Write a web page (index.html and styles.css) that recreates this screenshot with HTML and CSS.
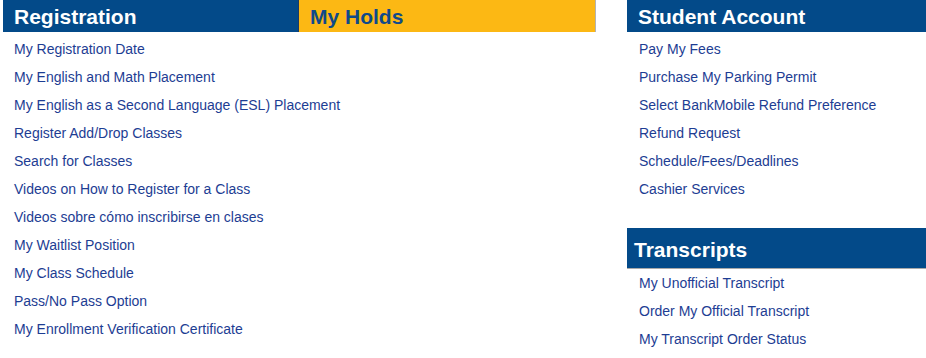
FILE: index.html
```html
<!DOCTYPE html>
<html lang="en">
<head>
<meta charset="utf-8">
<title>Registration</title>
<link rel="stylesheet" href="styles.css">
</head>
<body>
<div class="page">
  <section class="col-main">
    <div class="tabs">
      <h2 class="tab tab-reg">Registration</h2>
      <h2 class="tab tab-holds">My Holds</h2>
    </div>
    <ul class="links">
      <li><a href="#">My Registration Date</a></li>
      <li><a href="#">My English and Math Placement</a></li>
      <li><a href="#">My English as a Second Language (ESL) Placement</a></li>
      <li><a href="#">Register Add/Drop Classes</a></li>
      <li><a href="#">Search for Classes</a></li>
      <li><a href="#">Videos on How to Register for a Class</a></li>
      <li><a href="#">Videos sobre cómo inscribirse en clases</a></li>
      <li><a href="#">My Waitlist Position</a></li>
      <li><a href="#">My Class Schedule</a></li>
      <li><a href="#">Pass/No Pass Option</a></li>
      <li><a href="#">My Enrollment Verification Certificate</a></li>
    </ul>
  </section>
  <aside class="col-side">
    <section class="panel">
      <h2 class="panel-head">Student Account</h2>
      <ul class="links links-side">
        <li><a href="#">Pay My Fees</a></li>
        <li><a href="#">Purchase My Parking Permit</a></li>
        <li><a href="#">Select BankMobile Refund Preference</a></li>
        <li><a href="#">Refund Request</a></li>
        <li><a href="#">Schedule/Fees/Deadlines</a></li>
        <li><a href="#">Cashier Services</a></li>
      </ul>
    </section>
    <section class="panel panel-transcripts">
      <h2 class="panel-head panel-head-lg">Transcripts</h2>
      <ul class="links links-side">
        <li><a href="#">My Unofficial Transcript</a></li>
        <li><a href="#">Order My Official Transcript</a></li>
        <li><a href="#">My Transcript Order Status</a></li>
      </ul>
    </section>
  </aside>
</div>
</body>
</html>
```

FILE: styles.css
```css
* {
  box-sizing: border-box;
}

html, body {
  margin: 0;
  padding: 0;
  background: #ffffff;
}

body {
  font-family: "Liberation Sans", Arial, sans-serif;
  overflow: hidden;
}

.page {
  display: flex;
  gap: 31px;
  padding-left: 3px;
  width: 926px;
}

.col-main {
  width: 593px;
  flex: none;
}

.col-side {
  width: 299px;
  flex: none;
}

.tabs {
  display: flex;
}

.tab {
  margin: 0;
  height: 32px;
  padding: 2px 0 0 11px;
  font-size: 21px;
  line-height: 30px;
  font-weight: bold;
}

.tab-reg {
  width: 296px;
  background: #034a89;
  color: #ffffff;
  border-right: 1px solid #1c3a63;
}

.tab-holds {
  width: 297px;
  background: #fcb814;
  color: #0f4a8a;
  border-right: 1px solid #b3b3b3;
}

.links {
  list-style: none;
  margin: 3px 0 0;
  padding: 0 0 0 11px;
}

.links li {
  height: 28px;
  font-size: 14px;
  line-height: 28px;
}

.links a {
  color: #1d3d93;
  text-decoration: none;
}

.links-side {
  padding-left: 12px;
}

.panel-head {
  margin: 0;
  height: 32px;
  padding: 2px 0 0 11px;
  font-size: 21px;
  line-height: 30px;
  font-weight: bold;
  background: #034a89;
  color: #ffffff;
}

.panel-transcripts {
  margin-top: 25px;
}

.panel-head-lg {
  height: 41px;
  padding: 4px 0 0 7px;
  line-height: 36px;
  border-bottom: 1px solid #a9a9a9;
}

.panel-transcripts .links {
  margin-top: 0;
}
```
